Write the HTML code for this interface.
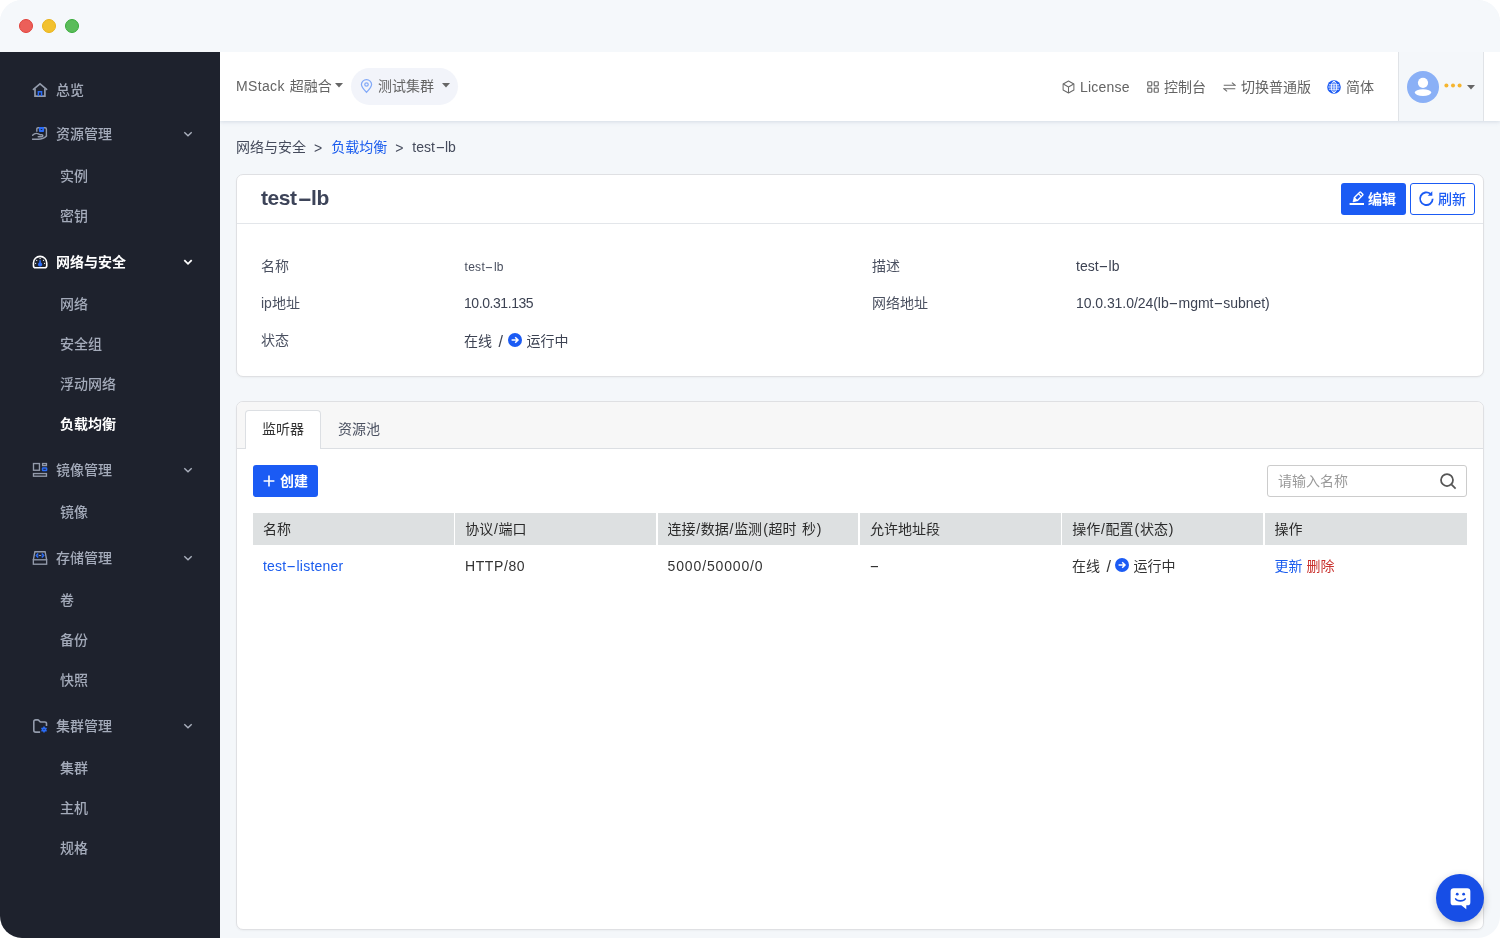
<!DOCTYPE html>
<html lang="zh-CN">
<head>
<meta charset="utf-8">
<title>test-lb</title>
<style>
*{box-sizing:border-box;margin:0;padding:0}
html,body{width:1500px;height:938px;overflow:hidden;background:#fff}
body{font-family:"Liberation Sans","Noto Sans CJK SC",sans-serif;font-size:14px;color:#3d4353}
.win{will-change:transform;position:absolute;left:0;top:0;width:1500px;height:938px;border-radius:22px;overflow:hidden;background:#f4f7fa}
.titlebar{position:absolute;left:0;top:0;width:1500px;height:52px;background:#f5f8fb;z-index:5}
.dot{position:absolute;top:19px;width:14px;height:14px;border-radius:50%}
.side{position:absolute;left:0;top:52px;width:220px;height:886px;background:#1e222d;z-index:4}
.mi{position:absolute;left:0;width:220px;height:24px;line-height:24px;font-size:14px;color:#a4abba;font-weight:500;white-space:nowrap}
.mi.top span{position:absolute;left:56px}
.mi.sub span{position:absolute;left:60px}
.mi.act{color:#fff;font-weight:700}
.mi svg.ic{position:absolute;left:32px;top:4px;width:16px;height:16px}
.mi svg.ch{position:absolute;left:182px;top:7px;width:12px;height:10px}
.header{position:absolute;left:220px;top:52px;width:1280px;height:69px;background:#fff;box-shadow:0 1px 4px rgba(120,140,170,.25)}
.abs{position:absolute;white-space:nowrap}
.card{position:absolute;left:236px;width:1248px;background:#fff;border:1px solid #dfe0e3;border-radius:7px;box-shadow:0 1px 2px rgba(0,0,0,.04)}
.lbl{position:absolute;white-space:nowrap;font-size:14px;line-height:20px;color:#4a5060}
.val{position:absolute;white-space:nowrap;font-size:14px;line-height:20px;color:#3d4353}
.btn{position:absolute;height:32px;border-radius:3px;font-size:14px;line-height:32px;white-space:nowrap}
.th{position:absolute;top:0;height:32px;line-height:32px;padding-left:10px;background:#dde0e1;color:#2b2b2b;font-size:14px;white-space:nowrap}
.hy{display:inline-block;transform:scaleX(2.1);margin:0 .19em}
.td{position:absolute;top:42px;height:22px;line-height:22px;font-size:14px;color:#333;white-space:nowrap}
</style>
</head>
<body>
<div class="win">
  <div class="titlebar">
    <div class="dot" style="left:19px;background:#ec5f59;border:1px solid #e0403a"></div>
    <div class="dot" style="left:42px;background:#f2c12e;border:1px solid #e9b21a"></div>
    <div class="dot" style="left:65px;background:#5abc5a;border:1px solid #38ab3a"></div>
  </div>

  <!-- SIDEBAR -->
  <div class="side" id="side">
<!--S0-->
    <div class="mi top" style="top:26px"><svg class="ic" viewBox="0 0 16 16" fill="none" stroke="#939bab" stroke-width="1.600"><path d="M3 6.400v7.700h9.900V6.400" stroke-width="1.700"/><path d="M1.400 7.400 8 1.900l6.600 5.500" stroke-linecap="round"/><path d="M6.350 14.100V9.700h3.200v4.400" stroke="#2b6cf6" stroke-width="1.500"/></svg><span>总览</span></div>
    <div class="mi top" style="top:70px"><svg class="ic" viewBox="0 0 16 16" fill="none" stroke="#939bab" stroke-width="1.400"><path d="M4.800 5.800V3a1.300 1.300 0 0 1 1.300-1.300h7a1.300 1.300 0 0 1 1.300 1.300v7.300"/><rect x="6.900" y="1" width="5.200" height="5.100" rx="1" fill="#2b6cf6" stroke="none"/><ellipse cx="9.500" cy="3.550" rx=".9" ry=".5" fill="#1e222d" stroke="none"/><path d="M.6 9.300C2.200 7.600 4.600 7 6.400 7.900l1.800.9h1.600c1.400 0 1.400 1.900 0 1.900H6.200" stroke-linecap="round"/><path d="M.4 13.200h5.800c3.400 0 6.400-1.200 8.300-3.200" stroke-linecap="round"/></svg><span>资源管理</span><svg class="ch" viewBox="0 0 12 10" fill="none" stroke="#aab0bd" stroke-width="1.4"><path d="M2.300 3.200 6 6.800l3.700-3.600"/></svg></div>
    <div class="mi sub" style="top:112px"><span>实例</span></div>
    <div class="mi sub" style="top:152px"><span>密钥</span></div>
    <div class="mi top act" style="top:198px"><svg class="ic" viewBox="0 0 16 16" fill="none" stroke="#ffffff" stroke-width="1.600"><path d="M1.450 9a6.650 6.650 0 0 1 13.300 0v2.800a2 2 0 0 1-2 2h-9.300a2 2 0 0 1-2-2z"/><g fill="#ffffff" stroke="none"><circle cx="8.100" cy="4.500" r=".65"/><circle cx="4.700" cy="6.300" r=".65"/><circle cx="11.500" cy="6.300" r=".65"/><circle cx="3.600" cy="9.300" r=".65"/><circle cx="12.600" cy="9.300" r=".65"/></g><path d="M7.300 6.200h1.600v2.300a2.100 2.100 0 1 1-1.600 0z" fill="#2b6cf6" stroke="none"/></svg><span>网络与安全</span><svg class="ch" viewBox="0 0 12 10" fill="none" stroke="#ffffff" stroke-width="1.8"><path d="M2.300 3.200 6 6.800l3.700-3.600"/></svg></div>
    <div class="mi sub" style="top:240px"><span>网络</span></div>
    <div class="mi sub" style="top:280px"><span>安全组</span></div>
    <div class="mi sub" style="top:320px"><span>浮动网络</span></div>
    <div class="mi sub act" style="top:360px"><span>负载均衡</span></div>
    <div class="mi top" style="top:406px"><svg class="ic" viewBox="0 0 16 16" fill="none" stroke="#939bab" stroke-width="1.350"><rect x="1.500" y="1.550" width="5.950" height="6.700"/><rect x="10.600" y="1.550" width="3.850" height="2.050"/><rect x="10.500" y="5.900" width="4.100" height="2.600" rx=".5" stroke="#2b6cf6" stroke-width="1.500"/><rect x="1.500" y="11.550" width="12.950" height="2.650"/></svg><span>镜像管理</span><svg class="ch" viewBox="0 0 12 10" fill="none" stroke="#aab0bd" stroke-width="1.4"><path d="M2.300 3.200 6 6.800l3.700-3.600"/></svg></div>
    <div class="mi sub" style="top:448px"><span>镜像</span></div>
    <div class="mi top" style="top:494px"><svg class="ic" viewBox="0 0 16 16" fill="none" stroke="#939bab" stroke-width="1.350"><path d="M1.350 9.800 2.900 1.700h10.200l1.550 8.100"/><rect x="1.350" y="9.800" width="13.300" height="4.400"/><path d="M6.700 5.500h2.600" stroke-width="1.100"/><path d="M6.200 3.400 4.400 5.500l1.800 2.100M9.800 3.400l1.800 2.100-1.800 2.100" stroke="#2b6cf6" stroke-width="1.600"/></svg><span>存储管理</span><svg class="ch" viewBox="0 0 12 10" fill="none" stroke="#aab0bd" stroke-width="1.4"><path d="M2.300 3.200 6 6.800l3.700-3.600"/></svg></div>
    <div class="mi sub" style="top:536px"><span>卷</span></div>
    <div class="mi sub" style="top:576px"><span>备份</span></div>
    <div class="mi sub" style="top:616px"><span>快照</span></div>
    <div class="mi top" style="top:662px"><svg class="ic" viewBox="0 0 16 16" fill="none" stroke="#939bab" stroke-width="1.600"><path d="M8.100 14.100H3.600a1.800 1.800 0 0 1-1.800-1.800V3.650a1.800 1.800 0 0 1 1.800-1.800h2.100c.5 0 .9.200 1.200.6l.7.900c.3.400.7.600 1.200.6h4.100a1.600 1.600 0 0 1 1.600 1.600V8"/><g transform="translate(12 11.600)"><circle r="2.250" fill="#2b6cf6" stroke="none"/><path d="M0-3V3M-2.600-1.500 2.600 1.500M-2.600 1.500 2.600-1.500" stroke="#2b6cf6" stroke-width="1.500"/><ellipse rx=".9" ry=".45" fill="#1e222d" stroke="none"/></g></svg><span>集群管理</span><svg class="ch" viewBox="0 0 12 10" fill="none" stroke="#aab0bd" stroke-width="1.4"><path d="M2.300 3.200 6 6.800l3.700-3.600"/></svg></div>
    <div class="mi sub" style="top:704px"><span>集群</span></div>
    <div class="mi sub" style="top:744px"><span>主机</span></div>
    <div class="mi sub" style="top:784px"><span>规格</span></div>
<!--S1-->
  </div>

  <!-- HEADER -->
  <div class="header" id="header">
<!--H0-->
    <div class="abs" style="left:16px;top:23px;height:22px;line-height:22px;font-size:14px;color:#646464"><span style="letter-spacing:.35px">MStack</span><span style="margin-right:1px"> </span>超融合</div>
    <svg class="abs" style="left:115px;top:31px" width="8" height="5" viewBox="0 0 8 5"><path d="M0 0h8L4 4.500z" fill="#666"/></svg>
    <div class="abs" style="left:131px;top:16px;width:107px;height:37px;border-radius:19px;background:#f2f4fa"></div>
    <svg class="abs" style="left:140px;top:27px" width="13" height="14.500" viewBox="0 0 12 14" preserveAspectRatio="none" fill="none" stroke="#82a9f8" stroke-width="1.150"><path d="M6 12.800C3 9.600 1.300 7.500 1.300 5.300a4.700 4.700 0 0 1 9.400 0c0 2.200-1.700 4.300-4.700 7.500z"/><circle cx="6" cy="5.300" r="1.600"/></svg>
    <div class="abs" style="left:158px;top:23px;height:22px;line-height:22px;font-size:14px;color:#646464">测试集群</div>
    <svg class="abs" style="left:222px;top:31px" width="8" height="5" viewBox="0 0 8 5"><path d="M0 0h8L4 4.500z" fill="#666"/></svg>

    <svg class="abs" style="left:842px;top:28px" width="13" height="14" viewBox="0 0 14 15" fill="none" stroke="#6a6a6a" stroke-width="1.100" stroke-linejoin="round"><path d="M7 1 12.800 4.200v6.600L7 14 1.200 10.800V4.200z"/><path d="M1.400 4.300 7 7.500l5.600-3.200M7 7.500V14"/></svg>
    <div class="abs" style="left:860px;top:24px;height:22px;line-height:22px;font-size:14px;color:#646464;letter-spacing:.2px">License</div>
    <svg class="abs" style="left:927px;top:29px" width="12" height="12" viewBox="0 0 13 13" fill="none" stroke="#6a6a6a" stroke-width="1.300"><rect x=".8" y=".8" width="4.400" height="4.400" rx=".8"/><rect x="7.800" y=".8" width="4.400" height="4.400" rx=".8"/><rect x=".8" y="7.800" width="4.400" height="4.400" rx=".8"/><rect x="7.800" y="7.800" width="4.400" height="4.400" rx=".8"/></svg>
    <div class="abs" style="left:944px;top:24px;height:22px;line-height:22px;font-size:14px;color:#646464">控制台</div>
    <svg class="abs" style="left:1003px;top:29px" width="13" height="12" viewBox="0 0 14 12" fill="none" stroke="#6a6a6a" stroke-width="1.100"><path d="M.8 4.200h12.400L9.600 1.200M13.200 7.800H.8l3.600 3"/></svg>
    <div class="abs" style="left:1021px;top:24px;height:22px;line-height:22px;font-size:14px;color:#646464">切换普通版</div>
    <svg class="abs" style="left:1107px;top:28px" width="14" height="14" viewBox="0 0 14 14"><circle cx="7" cy="7" r="6.800" fill="#1b5bf4"/><g fill="none" stroke="#fff" stroke-width=".9"><ellipse cx="7" cy="7" rx="2.700" ry="5.700"/><path d="M7 1.200v11.600M1.900 4.800h10.200M1.900 9.200h10.200M1.200 7h11.600" /></g></svg>
    <div class="abs" style="left:1126px;top:24px;height:22px;line-height:22px;font-size:14px;color:#646464">简体</div>

    <div class="abs" style="left:1178px;top:0;width:86px;height:69px;background:#f4f7fa;border-left:1px solid #e0e3e7;border-right:1px solid #e0e3e7"></div>
    <svg class="abs" style="left:1187px;top:19px" width="32" height="32" viewBox="0 0 32 32"><circle cx="16" cy="16" r="16" fill="#8ab0f6"/><circle cx="16" cy="11.800" r="5.100" fill="#fff"/><ellipse cx="16" cy="21.600" rx="8.200" ry="3.300" fill="#fff"/></svg>
    <svg class="abs" style="left:1224px;top:31px" width="18" height="5" viewBox="0 0 18 5" fill="#f5b52e"><circle cx="2.400" cy="2.400" r="2"/><circle cx="9" cy="2.400" r="2"/><circle cx="15.600" cy="2.400" r="2"/></svg>
    <svg class="abs" style="left:1247px;top:33px" width="8" height="5" viewBox="0 0 8 5"><path d="M0 0h8L4 4.500z" fill="#666"/></svg>
<!--H1-->
  </div>

  <!-- BREADCRUMB -->
  <div class="abs" style="left:236px;top:136px;height:22px;line-height:22px;font-size:14px;color:#454b5c">网络与安全 <span style="margin:0 5.100px 0 4.100px;position:relative;top:1px">&gt;</span> <span style="color:#1a5cee">负载均衡</span> <span style="margin:0 5.100px 0 4.100px;position:relative;top:1px">&gt;</span> test<span class="hy">-</span>lb</div>

  <!-- CARD 1 -->
  <div class="card" id="card1" style="top:174px;height:203px">
<!--card10-->
    <div class="abs" style="left:24px;top:8px;height:30px;line-height:30px;font-size:21px;font-weight:700;color:#3d4459;letter-spacing:-.45px">test<span class="hy">-</span>lb</div>
    <div class="btn" style="left:1104px;top:8px;width:65px;background:#1b5bf4;color:#fff;font-weight:700">
      <svg class="abs" style="left:8px;top:7px" width="16" height="16" viewBox="0 0 16 16"><g transform="translate(8.300,7.600) rotate(45)" stroke="#fff" stroke-width="1.400" fill="none"><rect x="-2.100" y="-6.300" width="4.200" height="8.600" rx=".7"/><path d="M-2.100 -3.600h4.200" stroke-width="1.100"/><path d="M-2.100 2.300 0 6 2.100 2.300z" fill="#fff" stroke-width=".8"/></g><path d="M.6 14h14.400" stroke="#fff" stroke-width="1.900" fill="none"/></svg>
      <span class="abs" style="left:27px;top:0">编辑</span>
    </div>
    <div class="btn" style="left:1173px;top:8px;width:65px;background:#fff;color:#1b5bf4;border:1px solid #1b5bf4;line-height:30px;font-weight:500">
      <svg class="abs" style="left:7px;top:6px" width="17" height="17" viewBox="0 0 17 17" fill="none" stroke="#1b5bf4" stroke-width="1.800"><path d="M14.700 8.800a6.300 6.300 0 1 1-2.200-4.900"/><path d="M14.300 1.200v4.600H9.700z" fill="#1b5bf4" stroke="none"/></svg>
      <span class="abs" style="left:27px;top:0">刷新</span>
    </div>
    <div class="abs" style="left:0;top:48px;width:1246px;height:1px;background:#e3e6ea"></div>

    <div class="lbl" style="left:24px;top:81px">名称</div>
    <div class="val" style="left:227.500px;top:82px;font-size:12px;letter-spacing:.3px;color:#484e5e">test<span class="hy">-</span>lb</div>
    <div class="lbl" style="left:635px;top:81px">描述</div>
    <div class="val" style="left:839px;top:81px">test<span class="hy">-</span>lb</div>

    <div class="lbl" style="left:24px;top:118px">ip地址</div>
    <div class="val" style="left:227px;top:118px;letter-spacing:-.43px">10.0.31.135</div>
    <div class="lbl" style="left:635px;top:118px">网络地址</div>
    <div class="val" style="left:839px;top:118px;letter-spacing:-.05px">10.0.31.0/24(lb<span class="hy">-</span>mgmt<span class="hy">-</span>subnet)</div>

    <div class="lbl" style="left:24px;top:155px">状态</div>
    <div class="val" style="left:227px;top:156px">在线 <span style="margin:0 1.600px 0 2.600px;font-size:16px;line-height:0;position:relative;top:.5px">/</span> <svg style="display:inline-block;vertical-align:-1px;margin:0 4px 0 0" width="14" height="14" viewBox="0 0 14 14"><circle cx="7" cy="7" r="7" fill="#1b5bf4"/><path d="M3.600 7h6.200M7.200 4.200 10 7l-2.800 2.800" fill="none" stroke="#fff" stroke-width="1.500"/></svg>运行中</div>
<!--card11-->
  </div>

  <!-- CARD 2 -->
  <div class="card" id="card2" style="top:401px;height:529px">
<!--card20-->
    <div class="abs" style="left:0;top:0;width:1246px;height:47px;background:#f7f7f7;border-bottom:1px solid #dcdfe3;border-radius:6px 6px 0 0"></div>
    <div class="abs" style="left:8px;top:8px;width:76px;height:39px;background:#fff;border:1px solid #dcdfe3;border-bottom:none;border-radius:4px 4px 0 0"></div>
    <div class="abs" style="left:25px;top:16px;height:22px;line-height:22px;font-size:14px;color:#333">监听器</div>
    <div class="abs" style="left:101px;top:16px;height:22px;line-height:22px;font-size:14px;color:#4a5060">资源池</div>

    <div class="btn" style="left:16px;top:63px;width:65px;background:#1b5bf4;color:#fff;font-weight:700">
      <svg class="abs" style="left:10px;top:10px" width="12" height="12" viewBox="0 0 12 12" fill="none" stroke="#fff" stroke-width="1.600"><path d="M6 .6v10.800M.6 6h10.800"/></svg>
      <span class="abs" style="left:27px;top:0">创建</span>
    </div>

    <div class="abs" style="left:1030px;top:63px;width:200px;height:32px;border:1px solid #ccc;border-radius:3px;background:#fff"></div>
    <div class="abs" style="left:1041px;top:68px;height:22px;line-height:22px;font-size:14px;color:#9a9a9a">请输入名称</div>
    <svg class="abs" style="left:1201.500px;top:70px" width="18" height="18" viewBox="0 0 18 18" fill="none" stroke="#555" stroke-width="1.750"><circle cx="8" cy="8" r="6"/><path d="M12.400 12.400 16.600 16.600"/></svg>

    <div class="abs" style="left:16px;top:111px;width:1214px;height:80px">
      <div class="th" style="left:0;width:200.700px">名称</div>
      <div class="th" style="left:202.300px;width:200.700px">协议<span style="margin:0 .7px">/</span>端口</div>
      <div class="th" style="left:404.600px;width:200.700px">连接<span style="margin:0 .7px">/</span>数据<span style="margin:0 .7px">/</span>监测<span style="margin:0 .8px 0 1px">(</span>超时<span style="margin-right:1.500px"> </span>秒<span style="margin-left:.8px">)</span></div>
      <div class="th" style="left:607px;width:200.700px">允许地址段</div>
      <div class="th" style="left:809.300px;width:200.700px">操作<span style="margin:0 .7px">/</span>配置<span style="margin:0 .8px 0 1px">(</span>状态<span style="margin-left:.8px">)</span></div>
      <div class="th" style="left:1011.600px;width:202.400px">操作</div>
      <div class="td" style="left:10px;color:#1a5cee;letter-spacing:.2px">test<span class="hy">-</span>listener</div>
      <div class="td" style="left:212px;letter-spacing:.6px">HTTP/80</div>
      <div class="td" style="left:414.600px;letter-spacing:.85px">5000/50000/0</div>
      <div class="td" style="left:617px"><span class="hy" style="margin-left:.14em">-</span></div>
      <div class="td" style="left:819px">在线 <span style="margin:0 .600px 0 2.600px;font-size:16px;line-height:0;position:relative;top:.5px">/</span> <svg style="display:inline-block;vertical-align:-1px;margin:0 4px 0 0" width="14" height="14" viewBox="0 0 14 14"><circle cx="7" cy="7" r="7" fill="#1b5bf4"/><path d="M3.600 7h6.200M7.200 4.200 10 7l-2.800 2.800" fill="none" stroke="#fff" stroke-width="1.500"/></svg>运行中</div>
      <div class="td" style="left:1021.600px"><span style="color:#1a5cee">更新</span> <span style="color:#c9302c">删除</span></div>
    </div>
<!--card21-->
  </div>

  <!-- CHAT FAB -->
  <div id="fab" style="position:absolute;left:1436px;top:874px;width:48px;height:48px;border-radius:50%;background:#174ee6;box-shadow:0 3px 8px rgba(0,0,0,.22)">
<!--fab0-->
    <svg class="abs" style="left:12.500px;top:12.500px" width="23.500" height="23.500" viewBox="0 0 22 22"><path d="M4.500 1.200h12.500a3 3 0 0 1 3 3v10a3 3 0 0 1-3 3h-.8v3.600l-4.700-3.600H4.500a3 3 0 0 1-3-3v-10a3 3 0 0 1 3-3z" fill="#fff"/><circle cx="7.700" cy="6.700" r="1.300" fill="#174ee6"/><circle cx="13.700" cy="6.700" r="1.300" fill="#174ee6"/><path d="M6.200 11.200c1.400 2.400 7.600 2.400 9 0" fill="none" stroke="#174ee6" stroke-width="1.500" stroke-linecap="round"/></svg>
<!--fab1-->
  </div>
</div>
</body>
</html>
